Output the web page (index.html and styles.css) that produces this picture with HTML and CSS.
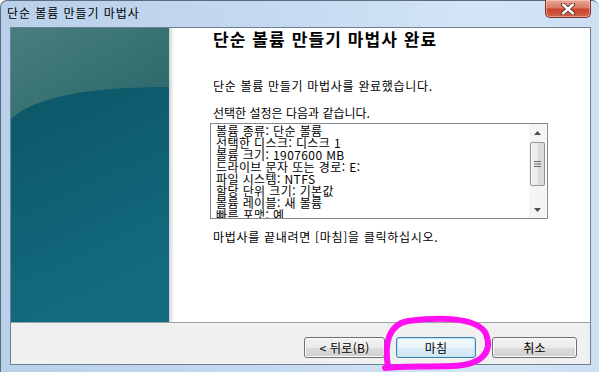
FILE: index.html
```html
<!DOCTYPE html>
<html lang="ko">
<head>
<meta charset="utf-8">
<title>단순 볼륨 만들기 마법사</title>
<link rel="stylesheet" href="styles.css">
</head>
<body>
<div class="window">
  <div class="titlebar">
    <span class="title">단순 볼륨 만들기 마법사</span>
    <div class="close">
      <svg width="16" height="12" viewBox="0 0 16 12">
        <path d="M3 1.5L13 10.5M13 1.5L3 10.5" stroke="#5b2a22" stroke-width="4.2" stroke-linecap="round"/>
        <path d="M3 1.5L13 10.5M13 1.5L3 10.5" stroke="#ffffff" stroke-width="2.4" stroke-linecap="round"/>
      </svg>
    </div>
  </div>
  <div class="client">
    <div class="body">
      <div class="banner">
        <svg width="158" height="294" viewBox="0 0 158 294">
          <defs>
            <linearGradient id="lo" x1="0" y1="0" x2="0.25" y2="1">
              <stop offset="0" stop-color="#0a5060"/>
              <stop offset="1" stop-color="#136b80"/>
            </linearGradient>
            <linearGradient id="hi" x1="0" y1="0" x2="1" y2="1">
              <stop offset="0" stop-color="#477f7e"/>
              <stop offset="1" stop-color="#2b6569"/>
            </linearGradient>
          </defs>
          <rect width="158" height="294" fill="url(#lo)"/>
          <path d="M0 0H158V59C80 59 25 68 0 91Z" fill="url(#hi)"/>
        </svg>
      </div>
      <div class="shadow"></div>
      <div class="content">
        <h1 class="heading">단순 볼륨 만들기 마법사 완료</h1>
        <p class="text first">단순 볼륨 만들기 마법사를 완료했습니다.</p>
        <p class="text second">선택한 설정은 다음과 같습니다.</p>
        <div class="listbox">
          <div class="lines">
            <div>볼륨 종류: 단순 볼륨</div>
            <div>선택한 디스크: 디스크 1</div>
            <div>볼륨 크기: 1907600 MB</div>
            <div>드라이브 문자 또는 경로: E:</div>
            <div>파일 시스템: NTFS</div>
            <div>할당 단위 크기: 기본값</div>
            <div>볼륨 레이블: 새 볼륨</div>
            <div>빠른 포맷: 예</div>
          </div>
          <div class="scrollbar">
            <div class="arrow">
              <svg width="7" height="4" viewBox="0 0 7 4"><path d="M0 4L3.5 0L7 4Z" fill="#4d4d4d"/></svg>
            </div>
            <div class="track">
              <div class="thumb">
                <svg width="7" height="6" viewBox="0 0 7 6"><path d="M0 0.5H7M0 3H7M0 5.5H7" stroke="#6a6a6a" stroke-width="1"/></svg>
              </div>
            </div>
            <div class="arrow">
              <svg width="7" height="4" viewBox="0 0 7 4"><path d="M0 0L3.5 4L7 0Z" fill="#4d4d4d"/></svg>
            </div>
          </div>
        </div>
        <p class="text third">마법사를 끝내려면 [마침]을 클릭하십시오.</p>
      </div>
    </div>
    <div class="footer">
      <button class="btn back">&lt; 뒤로(B)</button>
      <button class="btn finish">마침</button>
      <button class="btn cancel">취소</button>
    </div>
  </div>
  <svg class="annotation" width="599" height="372" viewBox="0 0 599 372">
    <path d="M388 367C385 348 386 325 408 321C440 317 478 317 486 334C493 352 482 365 452 366C420 367 401 366 385 368" fill="none" stroke="#ff10f0" stroke-width="6" stroke-linecap="round" stroke-linejoin="round"/>
  </svg>
</div>
</body>
</html>
```

FILE: styles.css
```css
* { box-sizing: border-box; }
html, body { margin: 0; padding: 0; }
body {
  width: 599px;
  height: 372px;
  overflow: hidden;
  background: #ffffff;
  font-family: "Noto Sans CJK KR", "Noto Sans", sans-serif;
  font-size: 12px;
  color: #000;
}
.window {
  position: relative;
  width: 599px;
  height: 372px;
  display: flex;
  flex-direction: column;
  padding: 0 8px 7px 9px;
  background: linear-gradient(to right, #b8d0e9, #c4daf0 45%, #d3e5f7 80%, #cde0f3);
  border-left: 1px solid #5d6d80;
  border-top: 1px solid #5d6d80;
  border-radius: 7px 7px 0 0;
}
.titlebar {
  height: 26px;
  flex: none;
  display: flex;
  justify-content: space-between;
  align-items: flex-start;
  margin-left: -6px;
}
.title {
  margin-top: 4px;
  margin-left: 3px;
  font-size: 12px;
  line-height: 16px;
  letter-spacing: 0.95px;
  color: #000;
}
.close {
  width: 46px;
  height: 18px;
  margin-top: -1px;
  border: 1px solid #7b3327;
  border-top: none;
  border-radius: 0 0 5px 5px;
  background: linear-gradient(#e9a897 0%, #dc7a64 45%, #c9442c 55%, #d5624a 100%);
  box-shadow: inset 0 0 0 1px rgba(255, 220, 210, 0.5);
  display: flex;
  align-items: center;
  justify-content: center;
}
.client {
  flex: 1;
  display: flex;
  flex-direction: column;
  border: 1px solid #6f7f92;
  background: #f0f0f0;
}
.body {
  display: flex;
  background: #ffffff;
  border-bottom: 1px solid #a0a0a0;
  flex: none;
  height: 295px;
}
.banner {
  width: 158px;
  height: 294px;
  flex: none;
}
.banner svg { display: block; }
.shadow {
  width: 5px;
  flex: none;
  background: linear-gradient(to right, #cfcfcf, #ffffff);
}
.content {
  flex: 1;
  padding: 1px 0 0 39px;
}
.heading {
  margin: 0;
  font-size: 17px;
  line-height: 20px;
  font-weight: bold;
  letter-spacing: 1.1px;
}
.text {
  margin: 0;
  line-height: 16px;
  letter-spacing: 0.7px;
}
.first { margin-top: 29px; }
.second { margin-top: 11px; letter-spacing: 0; }
.third { margin-top: 10px; }
.listbox {
  margin: 2px 0 0 -3px;
  width: 338px;
  height: 96px;
  border: 1px solid #828790;
  background: #fff;
  display: flex;
  overflow: hidden;
}
.lines {
  flex: 1;
  padding: 1px 0 0 5px;
  line-height: 12px;
  letter-spacing: 0.4px;
  overflow: hidden;
  white-space: nowrap;
}
.scrollbar {
  width: 17px;
  flex: none;
  display: flex;
  flex-direction: column;
  background: #f4f4f4;
  margin-right: 1px;
}
.arrow {
  height: 17px;
  flex: none;
  display: flex;
  align-items: center;
  justify-content: center;
}
.track {
  flex: 1;
  padding-top: 1px;
}
.thumb {
  margin: 0 1px;
  height: 44px;
  border: 1px solid #979797;
  border-radius: 2px;
  background: linear-gradient(to right, #f3f3f3, #e8e8e8 50%, #d8d8d8 51%, #dcdcdc);
  display: flex;
  align-items: center;
  justify-content: center;
}
.footer {
  flex: 1;
  display: flex;
  justify-content: flex-end;
  align-items: flex-start;
  padding: 14px 13px 0 0;
}
.btn {
  height: 21px;
  padding: 0;
  font-family: "Noto Sans CJK KR", "Noto Sans", sans-serif;
  font-size: 12px;
  line-height: 18px;
  letter-spacing: 0.3px;
  color: #000;
  border: 1px solid #707070;
  border-radius: 3px;
  background: linear-gradient(#f2f2f2 0%, #ebebeb 50%, #dddddd 51%, #cfcfcf 100%);
  box-shadow: inset 0 0 0 1px #fbfbfb;
}
.back { width: 81px; }
.finish {
  width: 80px;
  margin-left: 11px;
  border-color: #3c7fb1;
  background: linear-gradient(#f4fafd 0%, #eaf4fa 50%, #dcecf6 51%, #d2e6f3 100%);
  box-shadow: inset 0 0 0 1px #bfe4f7;
}
.cancel {
  width: 85px;
  margin-left: 16px;
}
.annotation {
  position: absolute;
  left: -1px;
  top: -1px;
  pointer-events: none;
}
```
